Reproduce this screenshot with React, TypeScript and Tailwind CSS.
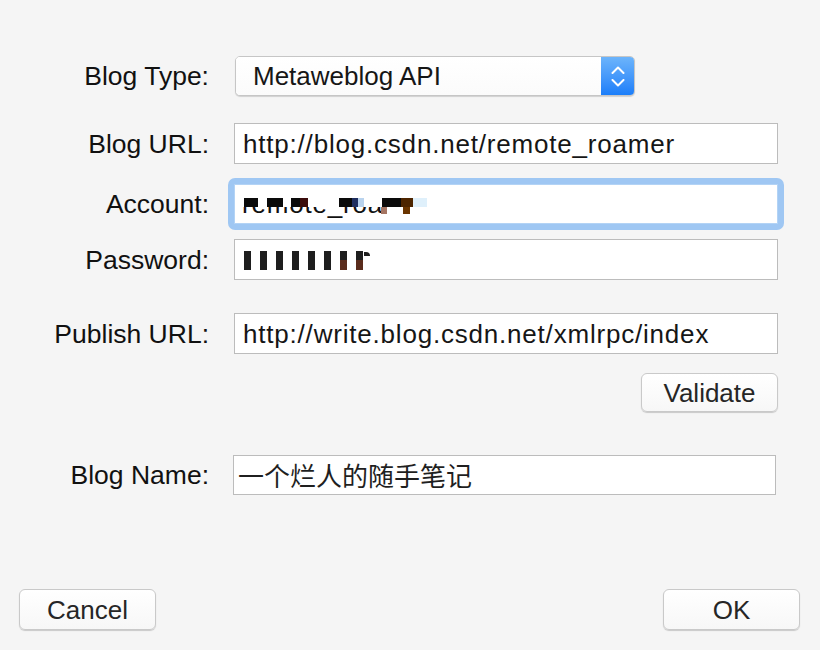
import React from "react";

const FONT = { fontFamily: '"Liberation Sans", Arial, sans-serif' } as const;

function Label({ children, w = "w-[209px]" }: { children: React.ReactNode; w?: string }) {
  return (
    <div className={`${w} shrink-0 text-right text-[26.5px] leading-[30px] text-[#111]`}>
      {children}
    </div>
  );
}

function Field({ children }: { children: React.ReactNode }) {
  return (
    <div className="ml-[25px] w-[544px] h-[41px] bg-white border border-[#bcbcbc] flex items-center pl-[8px] text-[26px] leading-[30px] tracking-[0.8px] text-[#161616] overflow-hidden">
      {children}
    </div>
  );
}

function MacButton({ children, w = "w-[137px]", h = "h-[41px]" }: { children: React.ReactNode; w?: string; h?: string }) {
  return (
    <div
      className={`${w} ${h} rounded-[6px] border border-[#c9c9c9] bg-gradient-to-b from-white to-[#f7f7f7] shadow-[0_1px_1px_rgba(0,0,0,0.18)] flex items-center justify-center text-[26px] leading-[30px] text-[#262626]`}
    >
      {children}
    </div>
  );
}

const accountBlocks: { l: number; w: number; c: string }[] = [
  { l: 2, w: 14, c: "#0a0a0a" },
  { l: 25, w: 16, c: "#0a0a0a" },
  { l: 49, w: 9, c: "#0a0a0a" },
  { l: 58, w: 8, c: "#3a0c0c" },
  { l: 97, w: 13, c: "#0a0a0a" },
  { l: 110, w: 6, c: "#1f2f60" },
  { l: 116, w: 6, c: "#b9d3ee" },
  { l: 140, w: 19, c: "#0a0a0a" },
  { l: 159, w: 12, c: "#4d2500" },
  { l: 171, w: 14, c: "#dff0fb" },
];

export default function App() {
  return (
    <div style={FONT} className="w-[820px] h-[650px] bg-[#f5f5f5] flex flex-col overflow-hidden">
      {/* Blog Type */}
      <div className="mt-[56px] flex items-center h-[40px]">
        <Label>Blog Type:</Label>
        <div className="ml-[26px] w-[400px] h-[40px] flex rounded-[5px] border border-[#c6c6c6] shadow-[0_1px_1px_rgba(0,0,0,0.15)] bg-white overflow-hidden">
          <div className="flex-1 flex items-center pl-[17px] text-[26px] leading-[30px] text-[#161616] bg-gradient-to-b from-white to-[#fbfbfb]">
            Metaweblog API
          </div>
          <div className="w-[33px] h-full bg-gradient-to-b from-[#6cb4fb] to-[#1a7ef9] flex flex-col items-center justify-center gap-[5px]">
            <svg width="14" height="8" viewBox="0 0 14 8">
              <path d="M1.5 7 L7 1.5 L12.5 7" fill="none" stroke="white" strokeWidth="2" strokeLinecap="round" strokeLinejoin="round" />
            </svg>
            <svg width="14" height="8" viewBox="0 0 14 8">
              <path d="M1.5 1 L7 6.5 L12.5 1" fill="none" stroke="white" strokeWidth="2" strokeLinecap="round" strokeLinejoin="round" />
            </svg>
          </div>
        </div>
      </div>

      {/* Blog URL */}
      <div className="mt-[27px] flex items-center">
        <Label>Blog URL:</Label>
        <Field>http://blog.csdn.net/remote_roamer</Field>
      </div>

      {/* Account (focused) */}
      <div className="mt-[20px] flex items-center h-[40px]">
        <Label>Account:</Label>
        <div className="ml-[19px] -my-[7px] p-[6px] rounded-[7px] bg-[#9fc7f3]">
          <div className="w-[544px] h-[40px] bg-white border border-[#b3d3f5] flex items-center pl-[7px] text-[26px] leading-[30px] tracking-[0.8px] text-[#111] overflow-hidden">
            <span className="relative inline-block h-[30px]">
              remote_roa
              <span className="absolute left-0 top-0 w-[200px] h-[18px] bg-white" />
              {accountBlocks.map((b, i) => (
                <span
                  key={i}
                  className="absolute top-[9px] h-[9px]"
                  style={{ left: b.l, width: b.w, background: b.c }}
                />
              ))}
              <span className="absolute top-[18px] h-[7px] w-[6px] left-[139px] bg-[#a57563]" />
              <span className="absolute top-[18px] h-[7px] w-[7px] left-[161px] bg-[#6a3500]" />
            </span>
          </div>
        </div>
      </div>

      {/* Password */}
      <div className="mt-[15px] flex items-center">
        <Label>Password:</Label>
        <Field>
          <div className="flex items-start h-[19px] gap-[9px] pl-[1px] mt-[2px]">
            {[0, 1, 2, 3, 4, 5].map((i) => (
              <span key={i} className="w-[7px] h-[19px] bg-[#1e1e1e]" />
            ))}
            <span className="w-[7px] h-[19px] bg-gradient-to-b from-[#1e1e1e] from-50% to-[#5a2c1c] to-50%" />
            <span className="w-[7px] h-[19px] bg-gradient-to-b from-[#1e1e1e] from-50% to-[#5a2c1c] to-50%" />
            <span className="-ml-[8px] w-[6px] h-[4px] mt-[1px] bg-[#1e1e1e] rounded-tr-[4px]" />
          </div>
        </Field>
      </div>

      {/* Publish URL */}
      <div className="mt-[33px] flex items-center">
        <Label>Publish URL:</Label>
        <Field>http://write.blog.csdn.net/xmlrpc/index</Field>
      </div>

      {/* Validate */}
      <div className="mt-[19px] flex justify-end pr-[42px]">
        <MacButton h="h-[39px]">Validate</MacButton>
      </div>

      {/* Blog Name */}
      <div className="mt-[43px] flex items-center">
        <Label>Blog Name:</Label>
        <div
          className="ml-[24px] w-[543px] h-[40px] bg-white border border-[#bcbcbc] flex items-center pl-[4px] text-[26px] leading-[30px] text-[#1f1f1f]"
          style={{ fontFamily: '"Noto Sans CJK SC", "Liberation Sans", sans-serif' }}
        >
          一个烂人的随手笔记
        </div>
      </div>

      {/* Bottom buttons */}
      <div className="mt-[94px] flex justify-between pl-[19px] pr-[20px]">
        <MacButton>Cancel</MacButton>
        <MacButton>OK</MacButton>
      </div>
    </div>
  );
}
